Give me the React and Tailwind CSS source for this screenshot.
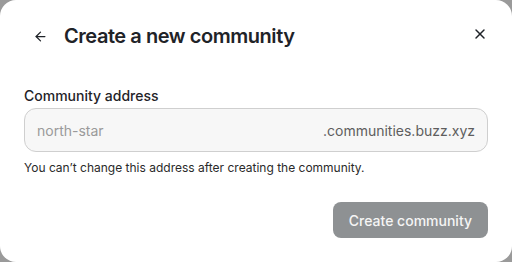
import React from "react";

export default function App() {
  return (
    <div className="w-[512px] h-[262px] bg-[#9a9a9a] overflow-hidden" style={{ fontFamily: "Inter, 'Noto Sans', sans-serif" }}>
      <div className="w-[512px] h-[262px] bg-white rounded-[16px] flex flex-col px-6">
        <div className="flex items-center h-[36px] mt-[18px]">
          <button className="w-[32px] h-[32px] flex items-center justify-center text-[#1f2328]">
            <svg width="15" height="15" viewBox="0 0 24 24" fill="none" stroke="currentColor" strokeWidth="2" strokeLinecap="round" strokeLinejoin="round">
              <path d="M19 12H5" />
              <path d="M12 19l-7-7 7-7" />
            </svg>
          </button>
          <h1 className="ml-[8px] text-[20px] leading-[28px] font-semibold text-[#1f2328] tracking-[-0.45px]">Create a new community</h1>
          <button className="ml-auto -mr-[4px] -mt-[4px] w-[24px] h-[24px] flex items-center justify-center text-[#1f2328]">
            <svg width="16" height="16" viewBox="0 0 24 24" fill="none" stroke="currentColor" strokeWidth="2.2" strokeLinecap="round">
              <path d="M18 6L6 18" />
              <path d="M6 6l12 12" />
            </svg>
          </button>
        </div>
        <label className="mt-[32px] text-[14px] leading-[20px] font-medium text-[#1f2328]">Community address</label>
        <div className="mt-[2px] h-[44px] rounded-[12px] border border-[#cfcfcf] bg-[#f7f7f7] flex items-center px-[12px] text-[14px]">
          <span className="text-[#9a9a9a]">north-star</span>
          <span className="ml-auto text-[#5e5e5e]">.communities.buzz.xyz</span>
        </div>
        <p className="mt-[8px] text-[12px] leading-[16px] text-[#2a2a2a]">You can’t change this address after creating the community.</p>
        <div className="flex justify-end mt-[26px]">
          <button className="h-[36px] px-[16px] rounded-[8px] bg-[#8e9193] text-[#f5f5f5] text-[14px] font-medium">Create community</button>
        </div>
      </div>
    </div>
  );
}
